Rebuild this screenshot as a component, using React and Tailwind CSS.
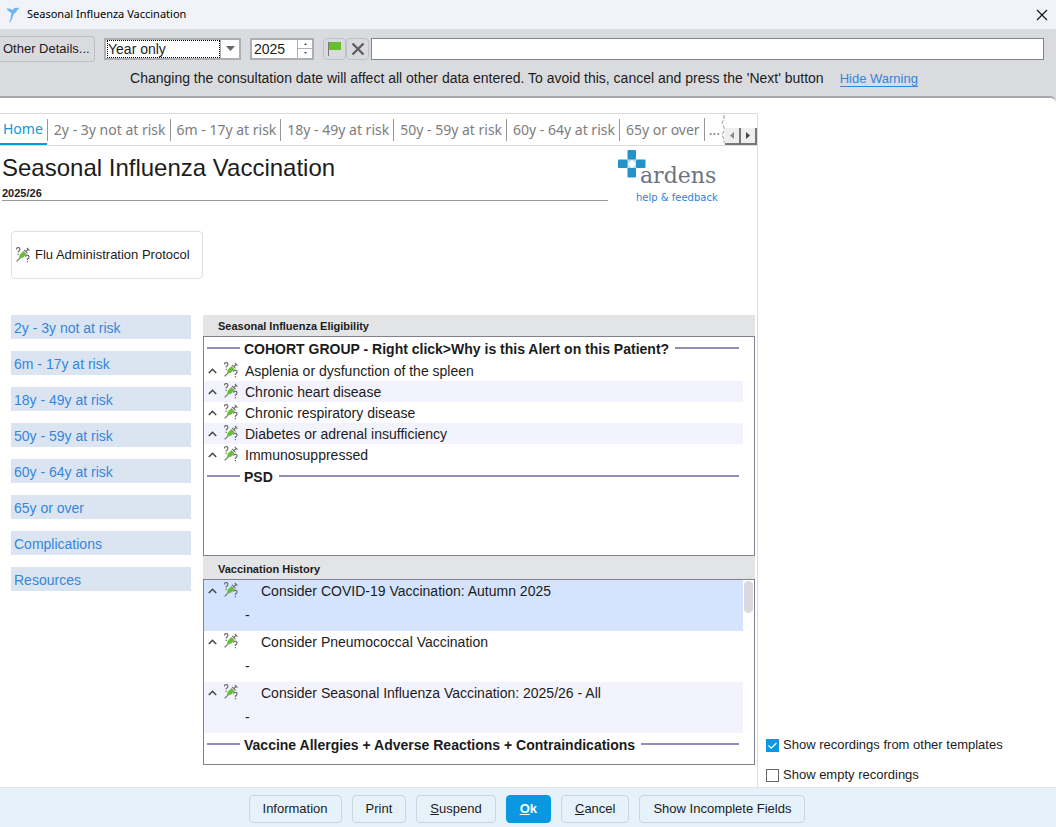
import React, { useState } from "react";

const tabs = [
  "Home",
  "2y - 3y not at risk",
  "6m - 17y at risk",
  "18y - 49y at risk",
  "50y - 59y at risk",
  "60y - 64y at risk",
  "65y or over",
];

const pages = [
  "2y - 3y not at risk",
  "6m - 17y at risk",
  "18y - 49y at risk",
  "50y - 59y at risk",
  "60y - 64y at risk",
  "65y or over",
  "Complications",
  "Resources",
];

const cohorts = [
  "Asplenia or dysfunction of the spleen",
  "Chronic heart disease",
  "Chronic respiratory disease",
  "Diabetes or adrenal insufficiency",
  "Immunosuppressed",
];

const history = [
  { title: "Consider COVID-19 Vaccination: Autumn 2025", bg: "bg-[#d4e4fe]" },
  { title: "Consider Pneumococcal Vaccination", bg: "bg-white" },
  { title: "Consider Seasonal Influenza Vaccination: 2025/26 - All", bg: "bg-[#f3f3fd]" },
];

const BirdIcon = () => (
  <svg width="15" height="16" viewBox="0 0 15 16" className="shrink-0" aria-hidden="true">
    <path d="M.3 1.800C2.500 1.200 4 1.500 5.500 2.500 6.500 3 7 2.800 7.500 2 8.500.6 10 .4 11 1L14 .8 11.500 2.600C11 4.500 9.500 5.500 8.300 6.800 6.800 8.500 6.500 10 6.300 11.500L4 15.600 3.200 14.500 4.600 12C4.800 10 4.600 8 5.600 6.200 4.500 5.400 2 4.200.3 1.800Z" fill="#6cb4f0" />
  </svg>
);

const SyringeIcon = () => (
  <svg width="14" height="16" viewBox="0 0 14 16" className="shrink-0" aria-hidden="true">
    <g fill="none" stroke="#6f6f6f" strokeWidth="1.200">
      <path d="M.6 2.600V1.600Q.6.700 1.600.700H2.800Q3.800.700 3.800 1.700V2.800Q3.800 3.500 3 4L2.200 4.600V5.600M2.200 6.700V7.900" />
      <path d="M9.700 9.800V9.300Q9.700 8.400 10.600 8.400H12Q12.900 8.400 12.900 9.300V10.300Q12.900 11 12.200 11.500L11.400 12.100V13M11.400 14V15.200" />
      <path d="M.6 14.400 4.200 10.800M9.500 5 12 2.500M10.800.900 13.500 3.600M8 2.900 11.500 6.400" />
    </g>
    <path d="M3.600 8 7.200 4.200 10.200 7.200 6.600 10.800 3 11.600Z" fill="#62c22c" />
    <path d="M7.200 4.200 10.200 7.200 6.600 10.800" fill="none" stroke="#7d8a78" strokeWidth=".6" />
  </svg>
);

const ChevronUp = () => (
  <svg width="9" height="6" viewBox="0 0 9 6" className="shrink-0" aria-hidden="true">
    <path d="M.8 5 4.500 1.300 8.200 5" fill="none" stroke="#444" strokeWidth="1.500" />
  </svg>
);

const ArdensMark = () => (
  <svg width="28" height="28" viewBox="0 0 28 28" className="shrink-0" aria-hidden="true">
    <rect x="9" y="9" width="10" height="10" fill="#bfe0ee" />
    <path d="M14 10 18 14 14 18 10 14Z" fill="#fff" />
    <g fill="#2492c8">
      <rect x="9.500" y="0" width="8.500" height="9.500" rx="1" />
      <rect x="0" y="9.500" width="9.500" height="8.500" rx="1" />
      <rect x="18" y="9.500" width="9.500" height="8.500" rx="1" />
      <rect x="9.500" y="18" width="8.500" height="9.500" rx="1" />
    </g>
  </svg>
);

const SectionLine = ({ children }) => (
  <div className="flex h-[23px] items-center pl-[3px] pr-[15px]">
    <span className="-mt-px h-[2px] w-[33px] shrink-0 bg-[#8e8eb6]" />
    <h3 className="whitespace-nowrap pl-1 pr-1.5 pt-px text-[14px] font-bold leading-[22px]">{children}</h3>
    <span className="-mt-px h-[2px] flex-1 bg-[#8e8eb6]" />
  </div>
);

const FooterButton = ({ children }) => (
  <button type="button" className="h-7 rounded border border-[#c9d6de] px-[13px] text-[13px] leading-[26px]">
    {children}
  </button>
);

const CheckOption = ({ label, checked, onChange }) => (
  <label className="flex h-5 items-center gap-1 text-[13px]">
    <span className="relative flex">
      <input
        type="checkbox"
        checked={checked}
        onChange={(e) => onChange(e.target.checked)}
        className="peer h-[13px] w-[13px] appearance-none border border-[#666] bg-white checked:border-[#0a99e0] checked:bg-[#0a99e0]"
      />
      <svg viewBox="0 0 13 13" className="pointer-events-none absolute inset-0 hidden peer-checked:block">
        <path d="M2.500 6.500 5.200 9.200 10.500 4" fill="none" stroke="#fff" strokeWidth="1.300" />
      </svg>
    </span>
    {label}
  </label>
);

const App = () => {
  const [dateType, setDateType] = useState("Year only");
  const [year, setYear] = useState("2025");
  const [notes, setNotes] = useState("");
  const [showOther, setShowOther] = useState(true);
  const [showEmpty, setShowEmpty] = useState(false);

  return (
    <div className="flex min-h-screen flex-col bg-[#dadbdf] font-['Liberation_Sans',Arial,sans-serif] text-[14px] text-[#1c1c1c]">
      {/* Title bar */}
      <header className="flex h-[29px] items-center bg-[#f1f3f9] pl-[6px] pr-2">
        <BirdIcon />
        <h1 className="ml-1.5 flex-1 font-['Noto_Sans',sans-serif] text-[11px] text-black">Seasonal Influenza Vaccination</h1>
        <button type="button" aria-label="Close">
          <svg width="12" height="12" viewBox="0 0 12 12">
            <path d="M1 1 11 11M11 1 1 11" stroke="#111" strokeWidth="1.100" />
          </svg>
        </button>
      </header>

      {/* Consultation date */}
      <div className="h-[67px] pr-3 pt-2">
        <div className="flex h-[23px] items-center">
          <button type="button" className="h-[26px] w-[95px] shrink-0 whitespace-nowrap rounded-r border border-l-0 border-[#bfc0c5] pl-[3px] text-left text-[13px]">
            Other Details...
          </button>
          <div className="relative ml-[9px] h-[22px] w-[137px] shrink-0 border-2 border-[#adafb5] bg-white">
            <select
              aria-label="Date type"
              value={dateType}
              onChange={(e) => setDateType(e.target.value)}
              className="ml-px block h-[18px] w-[113px] appearance-none border border-dotted border-black text-[14px] leading-4"
            >
              <option>Year only</option>
              <option>Exact date</option>
            </select>
            <span className="pointer-events-none absolute inset-y-0 right-0 flex w-[19px] items-center justify-center border-l border-[#adafb5]">
              <svg width="9" height="5" viewBox="0 0 9 5"><path d="M0 0H9L4.500 5Z" fill="#666" /></svg>
            </span>
          </div>
          <div className="ml-[9px] flex h-[22px] w-16 shrink-0 border-2 border-[#adafb5] bg-white">
            <input
              aria-label="Year"
              value={year}
              onChange={(e) => setYear(e.target.value)}
              className="h-[18px] w-[45px] pl-0.5 text-[14px] leading-4 outline-none"
            />
            <div className="flex flex-1 flex-col border-l border-[#adafb5]">
              <button type="button" aria-label="Next year" className="flex flex-1 items-center justify-center border-b border-[#adafb5]">
                <svg width="3" height="2" viewBox="0 0 3 2"><path d="M0 2H3L1.500 0Z" fill="#555" /></svg>
              </button>
              <button type="button" aria-label="Previous year" className="flex flex-1 items-center justify-center">
                <svg width="3" height="2" viewBox="0 0 3 2"><path d="M0 0H3L1.500 2Z" fill="#555" /></svg>
              </button>
            </div>
          </div>
          <button type="button" aria-label="Flag" className="ml-[9px] flex h-[22px] w-[23px] shrink-0 items-center justify-center rounded border border-[#c0c1c6]">
            <svg width="13" height="14" viewBox="0 0 13 14">
              <path d="M.5 0V14" stroke="#777" />
              <path d="M1 0H13V8H1Z" fill="#64c02b" />
            </svg>
          </button>
          <button type="button" aria-label="Clear" className="flex h-[22px] w-[23px] shrink-0 items-center justify-center rounded border border-[#c0c1c6]">
            <svg width="14" height="14" viewBox="0 0 14 14">
              <path d="M1.500 1.500 12.500 12.500M12.500 1.500 1.500 12.500" stroke="#5f5f5f" strokeWidth="2.400" />
            </svg>
          </button>
          <input
            aria-label="Notes"
            value={notes}
            onChange={(e) => setNotes(e.target.value)}
            className="ml-0.5 h-[22px] min-w-0 flex-1 border border-[#82848f] bg-white px-1 outline-none"
          />
        </div>
        <p className="mt-2 flex justify-center gap-4 pl-1 leading-5">
          <span>Changing the consultation date will affect all other data entered. To avoid this, cancel and press the 'Next' button</span>
          <a href="#" className="mt-px h-[18px] border-b border-[#2f86de] text-[13px] leading-[19px] text-[#2f86de]">Hide Warning</a>
        </p>
      </div>

      <div className="grid flex-1 grid-cols-[758fr_298fr] rounded-tr-md border-t-2 border-[#a6a7ad] bg-white pt-[15px]">
        <main className="min-w-0 border-r border-t border-[#dcdcdc]">
          {/* Template tabs */}
          <nav className="flex h-8 items-stretch overflow-hidden whitespace-nowrap border-b border-[#dcdcdc] font-['Noto_Sans',sans-serif] text-[14px] text-[#7d7d7d]">
            {tabs.map((tab, i) => (
              <button
                key={tab}
                type="button"
                className={
                  i === 0
                    ? "shrink-0 border-b-2 border-[#0a99dc] pl-[3px] pr-1 text-[#0a99dc]"
                    : "flex shrink-0 items-center"
                }
              >
                {i > 0 && <span className="mr-1.5 h-[22px] w-px bg-[#999]" />}
                <span className={i > 0 ? "pr-1" : ""}>{tab}</span>
              </button>
            ))}
            <span className="my-1 w-px shrink-0 bg-[#999]" />
            <span className="min-w-0 flex-1 self-center overflow-hidden pl-1">...</span>
            <svg width="4" height="29" viewBox="0 0 4 29" className="shrink-0">
              <path d="M3 1V5L1 9 3 13V17L1 21 3 25V29" fill="none" stroke="#999" strokeDasharray="4 1.500" />
            </svg>
            <div className="flex h-[17px] shrink-0 self-end">
              <button type="button" aria-label="Scroll left" className="flex w-4 items-center justify-center border-b-2 border-r-2 border-[#777] bg-[#eee]">
                <svg width="4" height="7" viewBox="0 0 4 7"><path d="M4 0V7L0 3.500Z" fill="#888" /></svg>
              </button>
              <button type="button" aria-label="Scroll right" className="flex w-4 items-center justify-center border-b-2 border-r-2 border-[#777] bg-[#eee]">
                <svg width="4" height="7" viewBox="0 0 4 7"><path d="M0 0V7L4 3.500Z" fill="#444" /></svg>
              </button>
            </div>
          </nav>

          {/* Template heading and logo */}
          <div className="flex">
            <div className="ml-0.5 h-[55px] w-[606px] border-b border-[#999]">
              <h2 className="pt-2 text-[24px] leading-7">Seasonal Influenza Vaccination</h2>
              <p className="mt-1 text-[11px] font-bold leading-[14px]">2025/26</p>
            </div>
            <div className="ml-2.5 flex flex-col pt-1">
              <div className="flex">
                <ArdensMark />
                <span className="-ml-1.5 mt-3 font-['DejaVu_Serif',serif] text-[22px] leading-7 text-[#6b7480]">ardens</span>
              </div>
              <a href="#" className="ml-[18px] mt-0.5 font-['DejaVu_Sans',sans-serif] text-[10px] leading-3 text-[#2684e6]">help &amp; feedback</a>
            </div>
          </div>

          <button type="button" className="ml-[11px] mt-[27px] flex h-12 items-center gap-[5px] rounded border border-[#dedfe1] pl-1 pr-3 text-[13px]">
            <SyringeIcon />
            Flu Administration Protocol
          </button>

          <div className="mt-9 flex gap-3 pb-[22px] pl-[11px] pr-0.5">
            <nav className="flex w-[180px] shrink-0 flex-col gap-3">
              {pages.map((page) => (
                <a key={page} href="#" className="h-6 bg-[#dbe5f2] pl-[3px] leading-[26px] text-[#3585dc]">
                  {page}
                </a>
              ))}
            </nav>

            <div className="min-w-0 flex-1">
              <h2 className="h-[21px] bg-[#e3e4e6] pl-[15px] text-[11px] font-bold leading-[22px]">Seasonal Influenza Eligibility</h2>
              <section className="h-[220px] border border-[#80838d]">
                <SectionLine>COHORT GROUP - Right click&gt;Why is this Alert on this Patient?</SectionLine>
                <ul className="mr-[11px]">
                  {cohorts.map((item) => (
                    <li key={item} className="flex h-[21px] items-center pl-1 even:bg-[#f3f3fd]">
                      <ChevronUp />
                      <span className="mx-[7px] mb-0.5"><SyringeIcon /></span>
                      <span className="pt-0.5">{item}</span>
                    </li>
                  ))}
                </ul>
                <SectionLine>PSD</SectionLine>
              </section>

              <h2 className="h-[23px] bg-[#e3e4e6] pl-[15px] text-[11px] font-bold leading-[26px]">Vaccination History</h2>
              <section className="relative h-[186px] border border-[#80838d]">
                <ul className="mr-[11px]">
                  {history.map((item) => (
                    <li key={item.title} className={`h-[51px] pl-1 ${item.bg}`}>
                      <div className="flex h-[22px] items-center">
                        <ChevronUp />
                        <span className="mb-0.5 ml-[7px] mr-[23px]"><SyringeIcon /></span>
                        {item.title}
                      </div>
                      <div className="pl-[37px] leading-[26px]">-</div>
                    </li>
                  ))}
                </ul>
                <SectionLine>Vaccine Allergies + Adverse Reactions + Contraindications</SectionLine>
                <span className="absolute right-px top-px h-8 w-[9px] rounded-full bg-[#d9dadf]" />
              </section>
            </div>
          </div>
        </main>

        {/* Recording filters */}
        <aside className="flex flex-col justify-end gap-2.5 pb-0.5 pl-2">
          <CheckOption label="Show recordings from other templates" checked={showOther} onChange={setShowOther} />
          <CheckOption label="Show empty recordings" checked={showEmpty} onChange={setShowEmpty} />
        </aside>
      </div>

      <footer className="flex h-10 items-center justify-center gap-2.5 border-t border-[#dce4e9] bg-[#e5f2fa] pr-0.5 pt-0.5">
        <FooterButton>Information</FooterButton>
        <FooterButton>Print</FooterButton>
        <FooterButton><u>S</u>uspend</FooterButton>
        <button type="button" className="h-7 rounded border border-[#0a99e0] bg-[#0a99e0] px-[13px] text-[13px] font-bold leading-[26px] text-white"><u>O</u>k</button>
        <FooterButton><u>C</u>ancel</FooterButton>
        <FooterButton>Show Incomplete Fields</FooterButton>
      </footer>
    </div>
  );
};

export default App;
